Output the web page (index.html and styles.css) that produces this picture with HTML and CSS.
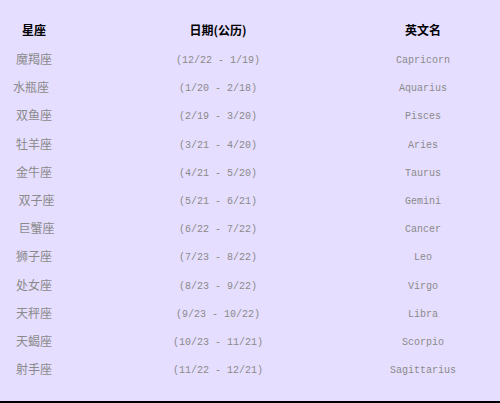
FILE: index.html
```html
<!DOCTYPE html>
<html lang="zh">
<head>
<meta charset="utf-8">
<title>星座</title>
<link rel="stylesheet" href="styles.css">
</head>
<body>
<div class="page">
  <div class="table">
    <div class="row head">
      <div class="c1 zh">星座</div>
      <div class="c2 zh">日期(公历)</div>
      <div class="c3 zh">英文名</div>
    </div>
    <div class="row"><div class="c1 zh">魔羯座</div><div class="c2 en">(12/22 - 1/19)</div><div class="c3 en">Capricorn</div></div>
    <div class="row"><div class="c1 zh nudge-l">水瓶座</div><div class="c2 en">(1/20 - 2/18)</div><div class="c3 en">Aquarius</div></div>
    <div class="row"><div class="c1 zh">双鱼座</div><div class="c2 en">(2/19 - 3/20)</div><div class="c3 en">Pisces</div></div>
    <div class="row"><div class="c1 zh">牡羊座</div><div class="c2 en">(3/21 - 4/20)</div><div class="c3 en">Aries</div></div>
    <div class="row"><div class="c1 zh">金牛座</div><div class="c2 en">(4/21 - 5/20)</div><div class="c3 en">Taurus</div></div>
    <div class="row"><div class="c1 zh nudge-r">双子座</div><div class="c2 en">(5/21 - 6/21)</div><div class="c3 en">Gemini</div></div>
    <div class="row"><div class="c1 zh nudge-r">巨蟹座</div><div class="c2 en">(6/22 - 7/22)</div><div class="c3 en">Cancer</div></div>
    <div class="row"><div class="c1 zh">狮子座</div><div class="c2 en">(7/23 - 8/22)</div><div class="c3 en">Leo</div></div>
    <div class="row"><div class="c1 zh">处女座</div><div class="c2 en">(8/23 - 9/22)</div><div class="c3 en">Virgo</div></div>
    <div class="row"><div class="c1 zh">天秤座</div><div class="c2 en">(9/23 - 10/22)</div><div class="c3 en">Libra</div></div>
    <div class="row"><div class="c1 zh">天蝎座</div><div class="c2 en">(10/23 - 11/21)</div><div class="c3 en">Scorpio</div></div>
    <div class="row"><div class="c1 zh">射手座</div><div class="c2 en">(11/22 - 12/21)</div><div class="c3 en">Sagittarius</div></div>
  </div>
</div>
</body>
</html>
```

FILE: styles.css
```css
html, body {
  margin: 0;
  padding: 0;
  background: #e6deff;
}
.page {
  width: 500px;
  height: 403px;
  box-sizing: border-box;
  border-bottom: 2px solid #000;
  padding-top: 14px;
}
.table {
  display: grid;
  grid-template-columns: 68px 300px 110px;
  grid-template-rows: 31px repeat(12, 28.2px);
}
.row {
  display: contents;
}
.row > div {
  display: flex;
  align-items: center;
  justify-content: center;
  white-space: pre;
  color: #8a8a8a;
}
.head > div {
  color: #000;
  font-weight: bold;
}
.zh {
  font-family: "Noto Sans CJK SC", sans-serif;
  font-size: 12px;
  padding-bottom: 1px;
}
.en {
  font-family: "Liberation Mono", monospace;
  font-size: 10px;
  padding-top: 3px;
}
.nudge-l {
  padding-right: 6px;
}
.nudge-r {
  padding-left: 5px;
}
```
